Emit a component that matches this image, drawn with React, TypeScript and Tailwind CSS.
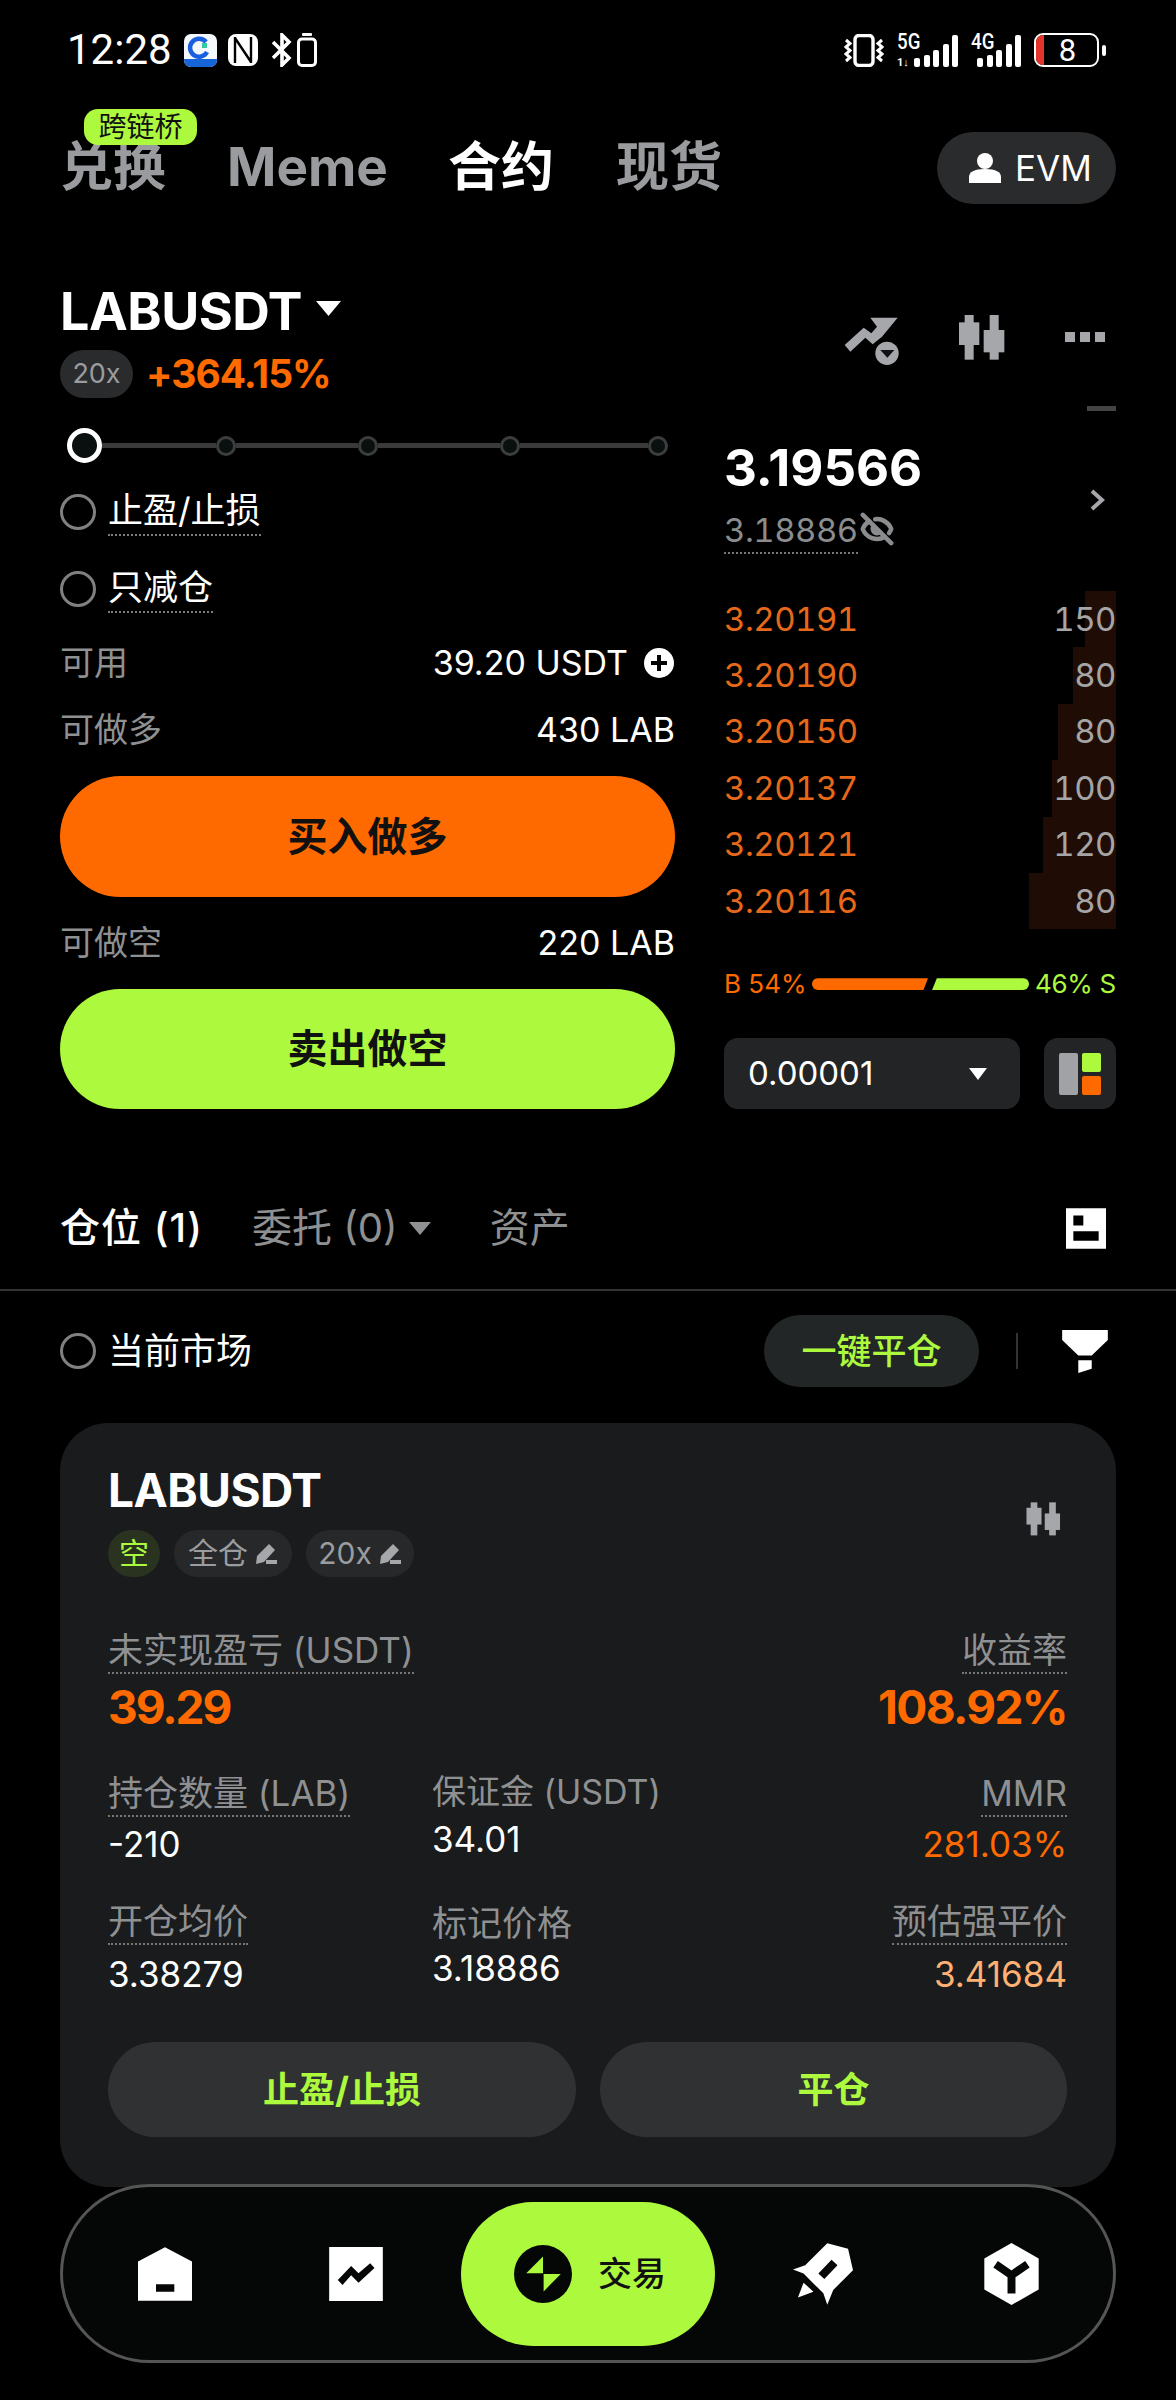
import React from "react";
import { EyeOff } from "lucide-react";

const F = "font-['Inter','Noto_Sans_CJK_SC',sans-serif]";

function Tri({ className }: { className: string }) {
  return (
    <svg viewBox="0 0 20 14" preserveAspectRatio="none" className={className}>
      <polygon points="0,0 20,0 10,14" fill="currentColor" />
    </svg>
  );
}

function Bars({ className }: { className?: string }) {
  const hs = [9, 12, 17, 23, 32];
  return (
    <div className={`flex items-end gap-[3.5px] h-[32px] ${className ?? ""}`}>
      {hs.map((h, i) => (
        <div key={i} className="w-[6px] rounded-[2px] bg-white" style={{ height: h }} />
      ))}
    </div>
  );
}

function StatusBar() {
  return (
    <div className="h-[100px] flex items-center justify-between pl-[67px] pr-[70px] text-white">
      <div className="flex items-center">
        <span className="font-['Roboto',sans-serif] text-[42px] leading-none w-[117px]">12:28</span>
        <svg viewBox="0 0 33 33" className="w-[33px] h-[33px]">
          <rect width="33" height="33" rx="7" fill="#f4f8fc" />
          <path d="M0 25h33v1a7 7 0 0 1-7 7H7a7 7 0 0 1-7-7z" fill="#1565d8" />
          <path d="M22 8a9 9 0 1 0 1 10" fill="none" stroke="#1a5fe0" strokeWidth="4.5" />
          <rect x="18" y="9" width="5" height="5" fill="#35c9a0" />
        </svg>
        <svg viewBox="0 0 30 32" className="w-[30px] h-[32px] ml-[11px]">
          <rect width="30" height="32" rx="8" fill="#fff" />
          <path d="M7 3v26M7 4l16 24M23 3v26" stroke="#000" strokeWidth="2.4" fill="none" />
        </svg>
        <svg viewBox="0 0 20 34" className="w-[20px] h-[34px] ml-[14px]">
          <path d="M1 9l16 16-7 7V2l7 7L1 25" fill="none" stroke="#fff" strokeWidth="3.6" />
        </svg>
        <svg viewBox="0 0 20 34" className="w-[20px] h-[34px] ml-[5px]">
          <rect x="5" y="0" width="10" height="3" rx="1" fill="#fff" />
          <rect x="1.5" y="6" width="17" height="26.5" rx="3.5" fill="none" stroke="#fff" strokeWidth="3" />
        </svg>
      </div>
      <div className="flex items-center">
        <svg viewBox="0 0 40 33" className="w-[40px] h-[33px]">
          <rect x="11" y="1.5" width="18" height="30" rx="4" fill="none" stroke="#fff" strokeWidth="3.4" />
          <path d="M2 6l4 3.5-4 3.5 4 3.5-4 3.5 4 3.5-4 3.5M38 6l-4 3.5 4 3.5-4 3.5 4 3.5-4 3.5 4 3.5" fill="none" stroke="#fff" strokeWidth="3" />
        </svg>
        <div className="relative w-[61px] h-[33px] ml-[13px]">
          <span className="absolute left-0 top-[-4px] font-['Roboto',sans-serif] font-medium text-[22px] leading-[24px] scale-x-85 origin-left">5G</span>
          <span className="absolute left-0 bottom-[-1px] font-['Roboto',sans-serif] font-bold text-[11px] leading-[11px]">1↓</span>
          <Bars className="absolute right-0 bottom-0" />
        </div>
        <div className="relative w-[50px] h-[33px] ml-[13px]">
          <span className="absolute left-0 top-[-4px] font-['Roboto',sans-serif] font-medium text-[22px] leading-[24px] scale-x-85 origin-left">4G</span>
          <Bars className="absolute right-0 bottom-0" />
        </div>
        <div className="relative w-[65px] h-[34px] ml-[13px] rounded-[9px] border-2 border-white overflow-hidden flex items-center justify-center">
          <div className="absolute left-0 top-0 bottom-0 w-[8px] bg-[#e5352b]" />
          <span className="font-['Roboto',sans-serif] text-[31px] leading-none pl-[2px]">8</span>
        </div>
        <div className="w-[4px] h-[11px] ml-[3px] rounded-full bg-white" />
      </div>
    </div>
  );
}

function TopTabs() {
  return (
    <div className={`mt-[32px] h-[72px] px-[60px] flex items-center justify-between ${F}`}>
      <div className="flex items-center font-bold text-[53px] leading-[60px] text-[#999b9e] mt-[-2px] whitespace-nowrap">
        <div className="relative w-[104px] mr-[63px]">
          <span>兑换</span>
          <span className="absolute left-[24px] top-[-28px] w-[113px] h-[36px] rounded-[14px] bg-[#adf93e] text-[#111] text-[28px] leading-[36px] font-normal text-center">跨链桥</span>
        </div>
        <span className="w-[158px] mr-[63px]">Meme</span>
        <span className="w-[104px] mr-[64px] text-white">合约</span>
        <span>现货</span>
      </div>
      <div className="w-[179px] h-[72px] rounded-full bg-[#2a2b2d] flex items-center pl-[32px] text-white">
        <svg viewBox="0 0 32 30" className="w-[32px] h-[30px]">
          <circle cx="16" cy="8" r="8" fill="#fff" />
          <path d="M0 30v-6c0-5 5-8 16-8s16 3 16 8v6z" fill="#fff" />
        </svg>
        <span className="ml-[14px] text-[35px] leading-none">EVM</span>
      </div>
    </div>
  );
}

function PairHeader() {
  return (
    <div className={`mt-[84px] h-[112px] px-[60px] flex justify-between ${F}`}>
      <div>
        <div className="flex items-center h-[48px] text-white">
          <span className="font-bold text-[52px] leading-[48px] tracking-[-0.5px]">LABUSDT</span>
          <Tri className="w-[25px] h-[15px] ml-[14px] mb-[8px] text-white" />
        </div>
        <div className="mt-[14px] flex items-center">
          <span className="w-[73px] h-[48px] rounded-full bg-[#2a2b2d] text-[#9a9c9f] text-[27px] leading-[48px] text-center">20x</span>
          <span className="ml-[13px] font-bold text-[39px] leading-[48px] tracking-[-1px] text-[#ff6a00]">+364.15%</span>
        </div>
      </div>
      <div className="flex mt-[27px] h-[50px] items-start pr-[11px]">
        <svg viewBox="30 40 180 150" className="w-[60px] h-[50px]">
          <polygon points="38,130 95,78 118,95 135,75 115,48 197,48 150,105 122,128 100,108 55,150" fill="#a5a7aa" />
          <circle cx="165" cy="155" r="35" fill="#a5a7aa" />
          <polygon points="145,145 187,145 166,168" fill="#111" />
        </svg>
        <svg viewBox="370 48 150 135" className="w-[50px] h-[45px] ml-[55px]">
          <rect x="393" y="48" width="27" height="134" fill="#a5a7aa" />
          <rect x="376" y="70" width="61" height="68" fill="#a5a7aa" />
          <rect x="468" y="48" width="27" height="134" fill="#a5a7aa" />
          <rect x="450" y="93" width="62" height="67" fill="#a5a7aa" />
        </svg>
        <div className="ml-[58px] mt-[17px] flex gap-[5px]">
          <div className="w-[10px] h-[10px] bg-[#a5a7aa]" />
          <div className="w-[10px] h-[10px] bg-[#a5a7aa]" />
          <div className="w-[10px] h-[10px] bg-[#a5a7aa]" />
        </div>
      </div>
    </div>
  );
}

function Knob() {
  return <div className="w-[20px] h-[20px] rounded-full border-[3px] border-[#3c3e3e] bg-[#0a0f0f] shrink-0" />;
}

function Slider() {
  const Line = ({ w }: { w: string }) => <div className={`h-[5px] bg-[#3a3a3a] ${w}`} />;
  return (
    <div className="h-[35px] mt-[28px] flex items-center pl-[7px]">
      <div className="w-[35px] h-[35px] rounded-full border-[5px] border-white bg-[#0a0f0f] shrink-0" />
      <Line w="w-[114px]" />
      <Knob />
      <Line w="w-[122px]" />
      <Knob />
      <Line w="w-[122px]" />
      <Knob />
      <Line w="w-[128px]" />
      <Knob />
    </div>
  );
}

function Check({ label, mt }: { label: string; mt: string }) {
  return (
    <div className={`flex items-start ${mt}`}>
      <div className="w-[36px] h-[36px] rounded-full border-[3px] border-[#808080]" />
      <span className="ml-[12px] h-[42px] text-white text-[35px] leading-[32px] border-b-2 border-dotted border-[#7d7d7d]">{label}</span>
    </div>
  );
}

function KV({ k, v, mt, plus }: { k: string; v: string; mt: string; plus?: boolean }) {
  return (
    <div className={`flex items-center justify-between h-[40px] ${mt}`}>
      <span className="text-[#8f9092] text-[34px] leading-[40px]">{k}</span>
      <div className="flex items-center text-white text-[34px] leading-[40px]">
        <span>{v}</span>
        {plus && (
          <svg viewBox="0 0 30 30" className="w-[30px] h-[30px] ml-[16px] mr-[1px]">
            <circle cx="15" cy="15" r="15" fill="#fff" />
            <path d="M15 7v16M7 15h16" stroke="#000" strokeWidth="4" />
          </svg>
        )}
      </div>
    </div>
  );
}

function TradeLeft() {
  return (
    <div className="w-[615px]">
      <Slider />
      <Check label="止盈/止损" mt="mt-[31px]" />
      <Check label="只减仓" mt="mt-[35px]" />
      <KV k="可用" v="39.20 USDT" mt="mt-[30px]" plus />
      <KV k="可做多" v="430 LAB" mt="mt-[27px]" />
      <button className="mt-[26px] w-full h-[121px] rounded-full bg-[#ff6a00] text-[#111] font-bold text-[40px]">买入做多</button>
      <KV k="可做空" v="220 LAB" mt="mt-[26px]" />
      <button className="mt-[26px] w-full h-[120px] rounded-full bg-[#adf93e] text-[#111] font-bold text-[40px]">卖出做空</button>
    </div>
  );
}

const book = [
  ["3.20191", "150", 31],
  ["3.20190", "80", 43],
  ["3.20150", "80", 58],
  ["3.20137", "100", 64],
  ["3.20121", "120", 73],
  ["3.20116", "80", 87],
] as const;

function TradeRight() {
  return (
    <div className="w-[392px] relative pt-[6px]">
      <div className="flex justify-end">
        <div className="w-[29px] h-[5px] bg-[#444]" />
      </div>
      <div className="mt-[27px] flex items-center justify-between">
        <div>
          <div className="text-white font-bold text-[51px] leading-[60px]">3.19566</div>
          <div className="relative mt-[14px] w-[134px] h-[42px] border-b-2 border-dotted border-[#777] text-[#8a8c8e] text-[33px] leading-[36px] tabular-nums tracking-[-0.5px]">
            3.18886
            <EyeOff className="absolute left-[136px] top-[0px] w-[34px] h-[34px]" strokeWidth={3.2} color="#8a8c8e" />
          </div>
        </div>
        <svg viewBox="0 0 16 22" className="w-[16px] h-[22px] mt-[8px] mr-[10px]">
          <path d="M2 2l10 9-10 9" fill="none" stroke="#a5a7aa" strokeWidth="4" />
        </svg>
      </div>
      <div className="mt-[37px]">
        {book.map(([p, q, w]) => (
          <div key={p} className="relative h-[56.4px] flex items-center justify-between text-[33px] leading-none tracking-[-0.5px]">
            <div className="absolute right-0 top-0 bottom-0 bg-[#1f0d05]" style={{ width: w }} />
            <span className="relative text-[#e8681a] tabular-nums">{p}</span>
            <span className="relative text-[#a5a5a5] tabular-nums">{q}</span>
          </div>
        ))}
      </div>
      <div className="mt-[39px] flex items-center h-[32px] text-[26px] leading-none">
        <span className="text-[#ff6a00] w-[88px] shrink-0 whitespace-nowrap">B 54%</span>
        <div className="w-[116px] shrink-0 h-[12px] bg-[#ff6a00] rounded-l-full [clip-path:polygon(0_0,100%_0,96%_100%,0_100%)]" />
        <div className="w-[97px] shrink-0 h-[12px] ml-[4px] bg-[#adf93e] rounded-r-full [clip-path:polygon(5%_0,100%_0,100%_100%,0_100%)]" />
        <span className="text-[#adf93e] ml-[6px] shrink-0 whitespace-nowrap tracking-[-0.3px]">46% S</span>
      </div>
      <div className="mt-[38px] flex justify-between">
        <div className="w-[296px] h-[71px] rounded-[14px] bg-[#232425] flex items-center justify-between pl-[24px] pr-[33px]">
          <span className="text-white text-[33px]">0.00001</span>
          <Tri className="w-[18px] h-[12px] text-white" />
        </div>
        <div className="w-[72px] h-[71px] rounded-[14px] bg-[#232425] flex items-center justify-center gap-[4px]">
          <div className="w-[19px] h-[42px] rounded-[2px] bg-[#a0a2a5]" />
          <div className="flex flex-col gap-[4px]">
            <div className="w-[19px] h-[19px] rounded-[2px] bg-[#adf93e]" />
            <div className="w-[19px] h-[19px] rounded-[2px] bg-[#ff6a00]" />
          </div>
        </div>
      </div>
    </div>
  );
}

function PositionTabs() {
  return (
    <div className="mt-[60px] h-[122px] px-[60px] pb-[2px] border-b-2 border-[#333] flex items-center justify-between">
      <div className="flex items-center text-[40px] leading-[60px]">
        <span className="text-white font-medium w-[142px] whitespace-nowrap tracking-[1px]">仓位 (1)</span>
        <span className="ml-[50px] text-[#8f9092] whitespace-nowrap">委托 (0)</span>
        <Tri className="w-[22px] h-[13px] ml-[11px] text-[#8f9092]" />
        <span className="ml-[59px] text-[#8f9092]">资产</span>
      </div>
      <svg viewBox="198 28 120 122" className="w-[40px] h-[41px] mr-[10px]">
        <path fillRule="evenodd" d="M198 28h120v122H198zM220 50v30h30V50zM220 97v29h76V97z" fill="#fff" />
      </svg>
    </div>
  );
}

function Filter() {
  return (
    <div className="mt-[24px] h-[72px] px-[60px] flex items-center">
      <div className="w-[36px] h-[36px] rounded-full border-[3px] border-[#808080]" />
      <span className="ml-[12px] text-white text-[36px] leading-none">当前市场</span>
      <div className="ml-auto w-[215px] h-[72px] rounded-full bg-[#232627] text-[#adf93e] font-medium text-[35px] flex items-center justify-center">一键平仓</div>
      <div className="ml-[37px] w-[2px] h-[36px] bg-[#333]" />
      <svg viewBox="190 390 136 128" className="ml-[44px] w-[46px] h-[43px] mr-[8px]">
        <polygon points="190,390 326,390 326,420 278,466 238,466 190,420" fill="#fff" />
        <polygon points="238,480 278,480 278,505 238,518" fill="#fff" />
      </svg>
    </div>
  );
}

function Pencil() {
  return (
    <svg viewBox="0 0 24 24" className="w-[24px] h-[24px] ml-[6px]">
      <polygon points="15,2 21,8 10,20 2,22 3,14" fill="#a5a7aa" />
      <rect x="12" y="18" width="11" height="4" fill="#a5a7aa" />
    </svg>
  );
}

function Label({ children }: { children: React.ReactNode }) {
  return (
    <span className="inline-block h-[44px] text-[#8f9092] text-[35px] leading-[40px] border-b-2 border-dotted border-[#777] whitespace-nowrap">{children}</span>
  );
}

function Card() {
  return (
    <div className="mt-[36px] h-[764px] mx-[60px] rounded-[48px] bg-[#191b1d] pl-[48px] pr-[49px] pt-[45px] overflow-hidden">
      <div className="flex items-center justify-between">
        <div>
          <div className="text-white font-bold text-[46px] leading-[44px] tracking-[-0.5px]">LABUSDT</div>
          <div className="mt-[18px] flex text-[30px] leading-[47px]">
            <span className="w-[52px] h-[47px] rounded-full bg-[#2a3320] text-[#adf93e] text-center">空</span>
            <span className="ml-[14px] w-[118px] h-[47px] rounded-full bg-[#26282a] text-[#9a9c9f] flex items-center justify-center">全仓<Pencil /></span>
            <span className="ml-[14px] w-[108px] h-[47px] rounded-full bg-[#26282a] text-[#9a9c9f] flex items-center justify-center">20x<Pencil /></span>
          </div>
        </div>
        <svg viewBox="370 48 150 135" className="w-[37px] h-[36px] mr-[5px] mb-[8px]">
          <rect x="393" y="48" width="27" height="134" fill="#a5a7aa" />
          <rect x="376" y="70" width="61" height="68" fill="#a5a7aa" />
          <rect x="468" y="48" width="27" height="134" fill="#a5a7aa" />
          <rect x="450" y="93" width="62" height="67" fill="#a5a7aa" />
        </svg>
      </div>
      <div className="mt-[53px] flex justify-between">
        <div>
          <Label>未实现盈亏 (USDT)</Label>
          <div className="mt-[10px] text-[#ff6a00] font-bold text-[46px] leading-[46px] tracking-[-2px]">39.29</div>
        </div>
        <div className="text-right">
          <Label>收益率</Label>
          <div className="mt-[10px] text-[#ff6a00] font-bold text-[46px] leading-[46px] tracking-[-1.6px]">108.92%</div>
        </div>
      </div>
      <div className="mt-[43px] grid grid-cols-[324px_1fr_auto]">
        <div>
          <Label>持仓数量 (LAB)</Label>
          <div className="mt-[7px] text-white text-[35px] leading-[40px]">-210</div>
        </div>
        <div>
          <span className="block text-[#8f9092] text-[34px] leading-[44px] whitespace-nowrap mt-[-3px]">保证金 (USDT)</span>
          <div className="mt-[5px] text-white text-[35px] leading-[40px]">34.01</div>
        </div>
        <div className="text-right">
          <Label>MMR</Label>
          <div className="mt-[7px] text-[#ff6a00] text-[35px] leading-[40px]">281.03%</div>
        </div>
      </div>
      <div className="mt-[37px] grid grid-cols-[324px_1fr_auto]">
        <div>
          <Label>开仓均价</Label>
          <div className="mt-[9px] text-white text-[35px] leading-[40px]">3.38279</div>
        </div>
        <div>
          <span className="block text-[#8f9092] text-[35px] leading-[44px]">标记价格</span>
          <div className="mt-[3px] text-white text-[35px] leading-[40px]">3.18886</div>
        </div>
        <div className="text-right">
          <Label>预估强平价</Label>
          <div className="mt-[9px] text-[#ffb073] text-[35px] leading-[40px]">3.41684</div>
        </div>
      </div>
      <div className="mt-[48px] flex gap-[24px]">
        <button className="w-[468px] h-[95px] rounded-full bg-[#2f3133] text-[#adf93e] font-bold text-[36px]">止盈/止损</button>
        <button className="w-[467px] h-[95px] rounded-full bg-[#2f3133] text-[#adf93e] font-bold text-[36px]">平仓</button>
      </div>
    </div>
  );
}

function Nav() {
  return (
    <div className="absolute left-[60px] top-[2184px] w-[1056px] h-[179px] rounded-full bg-[#050706] border-[3px] border-[#555] flex items-center pl-[75px]">
      <svg viewBox="53 52 162 161" className="w-[54px] h-[54px]">
        <path fillRule="evenodd" d="M53 95L134 52l81 43v118H53zM107 163v23h55v-23z" fill="#fff" />
      </svg>
      <svg viewBox="627 51 161 162" className="w-[54px] h-[54px] ml-[137px]">
        <path fillRule="evenodd" d="M627 51h161v162H627zM653 150l14 15 26-29 22 22 48-44-13-14-35 30-22-22z" fill="#fff" />
      </svg>
      <div className="ml-[78px] w-[254px] h-[144px] rounded-full bg-[#adf93e] flex items-center pl-[53px]">
        <svg viewBox="1178 42 180 180" className="w-[58px] h-[60px]">
          <circle cx="1268" cy="132" r="90" fill="#050706" />
          <polygon points="1268,78 1216,130 1268,130" fill="#adf93e" />
          <polygon points="1270,132 1323,132 1270,186" fill="#adf93e" />
        </svg>
        <span className="ml-[26px] text-[#111] font-medium text-[34px] leading-none">交易</span>
      </div>
      <svg viewBox="68 38 182 187" className="w-[60px] h-[62px] ml-[78px]">
        <path fillRule="evenodd" d="M68 118l37-13 67-67 63 17 15 65-60 60-18 45-12-35-30-30-30-30zM145 130l18 17 40-42-18-17z" fill="#fff" />
        <polygon points="100,158 130,185 83,203" fill="#fff" />
      </svg>
      <svg viewBox="643 38 164 187" className="w-[55px] h-[62px] ml-[131px]">
        <polygon points="725,38 807,85 807,178 725,225 643,178 643,85" fill="#fff" />
        <path d="M677 102l48 33 48-33M725 135v55" fill="none" stroke="#050706" strokeWidth="24" />
      </svg>
    </div>
  );
}

export default function App() {
  return (
    <div className={`relative w-[1176px] h-[2400px] bg-black overflow-hidden ${F}`}>
      <StatusBar />
      <TopTabs />
      <PairHeader />
      <div className="flex px-[60px] gap-[49px]">
        <TradeLeft />
        <TradeRight />
      </div>
      <PositionTabs />
      <Filter />
      <Card />
      <Nav />
    </div>
  );
}
